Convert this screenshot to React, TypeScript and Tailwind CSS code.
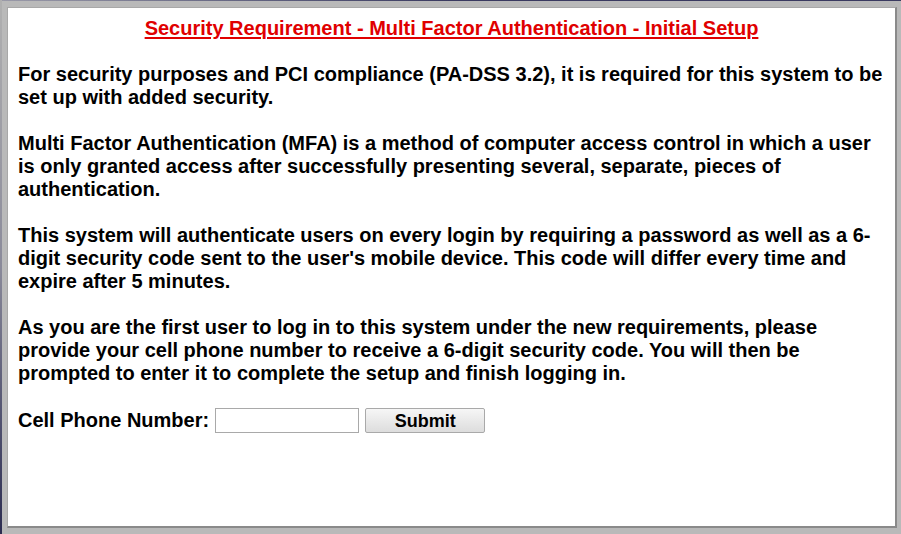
export default function App() {
  return (
    <div className="w-[901px] h-[534px] bg-[#b9b9b9] relative overflow-hidden" style={{ fontFamily: '"Liberation Sans", Arial, sans-serif' }}>
      <div className="absolute left-0 top-0 w-full h-px bg-gradient-to-r from-[#9a9aa8] via-[#3a3a60] to-[#3a3a60]" />
      <div className="absolute left-0 top-0 h-full w-[2px] bg-gradient-to-b from-[#b0b0b0] via-[#8a8a9a] to-[#2c2c50]" />
      <div className="p-[7px] pr-[4px] pb-[6px] h-full">
        <div className="h-full bg-white border-t border-l border-t-[#a8a8a8] border-l-[#a8a8a8] border-r-2 border-b-2 border-r-[#8a8a8a] border-b-[#8a8a8a] px-[10px] pt-[9px] font-bold text-black text-[20px] leading-[23px]">
          <div className="text-center text-[#e00000] underline underline-offset-2">Security Requirement - Multi Factor Authentication - Initial Setup</div>
          <div className="mt-[23px]">
            For security purposes and PCI compliance (PA-DSS 3.2), it is required for this system to be set up with added security.
          </div>
          <div className="mt-[23px]">
            Multi Factor Authentication (MFA) is a method of computer access control in which a user is only granted access after successfully presenting several, separate, pieces of authentication.
          </div>
          <div className="mt-[23px]">
            This system will authenticate users on every login by requiring a password as well as a 6-digit security code sent to the user's mobile device. This code will differ every time and expire after 5 minutes.
          </div>
          <div className="mt-[23px]">
            As you are the first user to log in to this system under the new requirements, please provide your cell phone number to receive a 6-digit security code. You will then be prompted to enter it to complete the setup and finish logging in.
          </div>
          <div className="mt-[23px] flex items-center">
            <span>Cell Phone Number:</span>
            <input type="text" className="ml-[6px] w-[144px] h-[25px] border border-[#a9a9a9] bg-white outline-none" />
            <button className="ml-[6px] w-[120px] h-[25px] border border-[#a9a9a9] bg-gradient-to-b from-[#f6f6f6] to-[#dddddd] text-[18px] leading-none font-bold rounded-[2px]">Submit</button>
          </div>
        </div>
      </div>
    </div>
  );
}
